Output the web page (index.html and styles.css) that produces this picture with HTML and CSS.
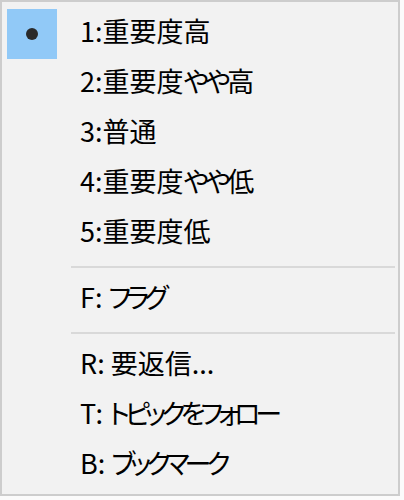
FILE: index.html
```html
<!DOCTYPE html>
<html lang="ja">
<head>
<meta charset="utf-8">
<link rel="stylesheet" href="styles.css">
</head>
<body>
<div class="menu">
  <div class="item">
    <span class="check checked"><span class="dot"></span></span>
    <span class="label">1:重要度高</span>
  </div>
  <div class="item">
    <span class="check"></span>
    <span class="label">2:重要度<span class="hira">やや</span>高</span>
  </div>
  <div class="item">
    <span class="check"></span>
    <span class="label">3:普通</span>
  </div>
  <div class="item">
    <span class="check"></span>
    <span class="label">4:重要度<span class="hira">やや</span>低</span>
  </div>
  <div class="item">
    <span class="check"></span>
    <span class="label">5:重要度低</span>
  </div>
  <div class="sep"></div>
  <div class="item">
    <span class="check"></span>
    <span class="label">F: <span class="kana">フラグ</span></span>
  </div>
  <div class="sep"></div>
  <div class="item">
    <span class="check"></span>
    <span class="label">R: 要返信...</span>
  </div>
  <div class="item">
    <span class="check"></span>
    <span class="label">T: <span class="kana">トピックをフォロー</span></span>
  </div>
  <div class="item">
    <span class="check"></span>
    <span class="label">B: <span class="kana">ブックマーク</span></span>
  </div>
</div>
</body>
</html>
```

FILE: styles.css
```css
html, body {
  margin: 0;
  padding: 0;
  background: #fbfbfb;
}
.menu {
  box-sizing: border-box;
  width: 400px;
  height: 496px;
  background: #f2f2f2;
  border: 2px solid #cdcdcd;
  padding: 7px 3px 0 5px;
  display: flex;
  flex-direction: column;
  font-family: "Noto Sans CJK JP", "Noto Sans", sans-serif;
  font-size: 27px;
  font-weight: 400;
  font-feature-settings: "palt";
  color: #000;
}
.item {
  display: flex;
  align-items: center;
  height: 50px;
  flex: none;
}
.check {
  width: 50px;
  height: 50px;
  flex: none;
  display: flex;
  align-items: center;
  justify-content: center;
}
.check.checked {
  background: #91c9f7;
}
.dot {
  width: 12px;
  height: 12px;
  border-radius: 50%;
  background: #2a2a2a;
}
.label {
  margin-left: 23px;
  margin-bottom: 6px;
  line-height: 44px;
  white-space: nowrap;
}
.hira {
  letter-spacing: -3.5px;
}
.kana {
  letter-spacing: -5px;
}
.sep {
  height: 2px;
  margin: 7px 0 7px 64px;
  background: #d9d9d9;
  flex: none;
}
```
